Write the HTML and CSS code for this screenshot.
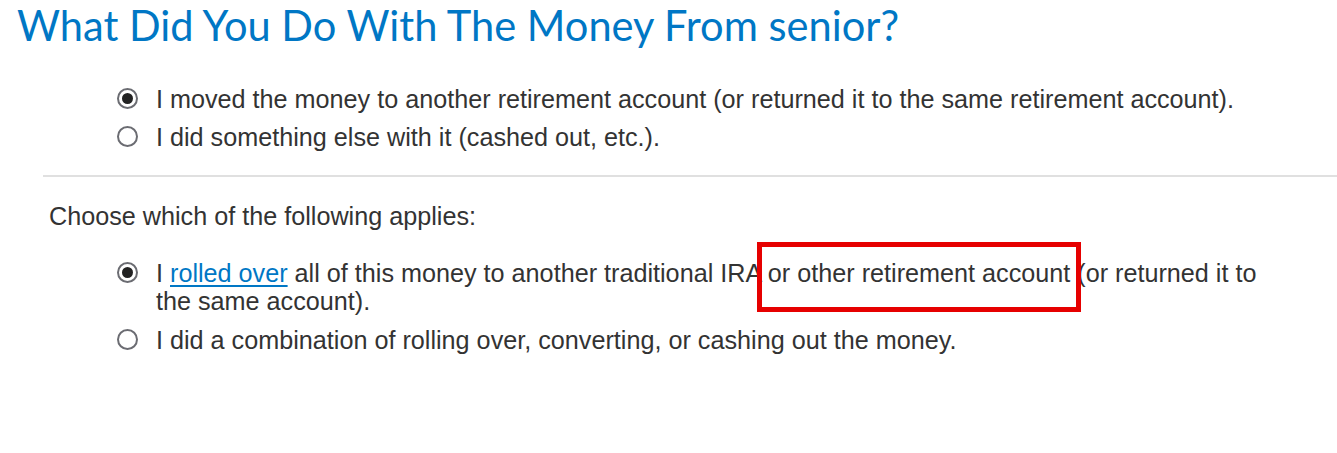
FILE: index.html
```html
<!DOCTYPE html>
<html lang="en">
<head>
    <meta charset="UTF-8">
    <meta name="viewport" content="width=device-width, initial-scale=1.0">
    <title>Rollover Question</title>
    <link rel="stylesheet" href="styles.css">
</head>
<body>
    <h1 class="page-title">What Did You Do With The Money From senior?</h1>

    <div class="content">
        <div class="radio-group">
            <label class="radio-option">
                <input type="radio" name="moved" checked>
                <span class="radio-text">I moved the money to another retirement account (or returned it to the same retirement account).</span>
            </label>
            <label class="radio-option">
                <input type="radio" name="moved">
                <span class="radio-text">I did something else with it (cashed out, etc.).</span>
            </label>
        </div>

        <hr class="divider">

        <p class="question">Choose which of the following applies:</p>

        <div class="radio-group">
            <label class="radio-option">
                <input type="radio" name="rollover" checked>
                <span class="radio-text">I <a href="#" class="term-link">rolled over</a> all of this money to another traditional IRA <span class="highlight">or other retirement account</span> (or returned it to the same account).</span>
            </label>
            <label class="radio-option">
                <input type="radio" name="rollover">
                <span class="radio-text">I did a combination of rolling over, converting, or cashing out the money.</span>
            </label>
        </div>
    </div>
</body>
</html>
```

FILE: styles.css
```css
:root {
    --blue: #0077c5;
    --text: #333;
    --radio-border: #6b6c72;
    --divider: #e0e0e0;
    --marker: #e60000;
}

* {
    margin: 0;
    padding: 0;
    box-sizing: border-box;
}

body {
    background: #fff;
    color: var(--text);
    font-family: 'Liberation Sans', Arial, sans-serif;
    font-size: 25.2px;
    line-height: 28px;
}

.page-title {
    font-family: Lato, 'Noto Sans', sans-serif;
    font-weight: 400;
    font-size: 41.6px;
    line-height: 50px;
    color: var(--blue);
    padding-left: 17px;
}

.content {
    padding-left: 43px;
}

.radio-group {
    display: flex;
    flex-direction: column;
    gap: 10px;
    padding-left: 74px;
}

.content > .radio-group:first-child {
    margin-top: 35px;
}

.radio-option {
    display: flex;
    align-items: flex-start;
    gap: 18px;
    cursor: pointer;
}

.radio-option input {
    appearance: none;
    -webkit-appearance: none;
    flex: none;
    width: 21px;
    height: 21px;
    margin-top: 3px;
    border: 2px solid var(--radio-border);
    border-radius: 50%;
    background: #fff;
    display: grid;
    place-items: center;
}

.radio-option input:checked::before {
    content: '';
    width: 11px;
    height: 11px;
    border-radius: 50%;
    background: #222;
}

.radio-text {
    padding-right: 60px;
}

.term-link {
    color: var(--blue);
    text-decoration: underline;
    text-underline-offset: 3px;
}

.highlight {
    position: relative;
}

.highlight::after {
    content: '';
    box-sizing: border-box;
    position: absolute;
    left: -11px;
    right: -11px;
    top: -17px;
    height: 70px;
    border: 5px solid var(--marker);
    pointer-events: none;
}

.divider {
    border: none;
    border-top: 2px solid var(--divider);
    margin: 24px 0 0;
}

.question {
    margin: 25px 0 29px 6px;
}

.content > .radio-group:last-child {
    gap: 11px;
}
```
